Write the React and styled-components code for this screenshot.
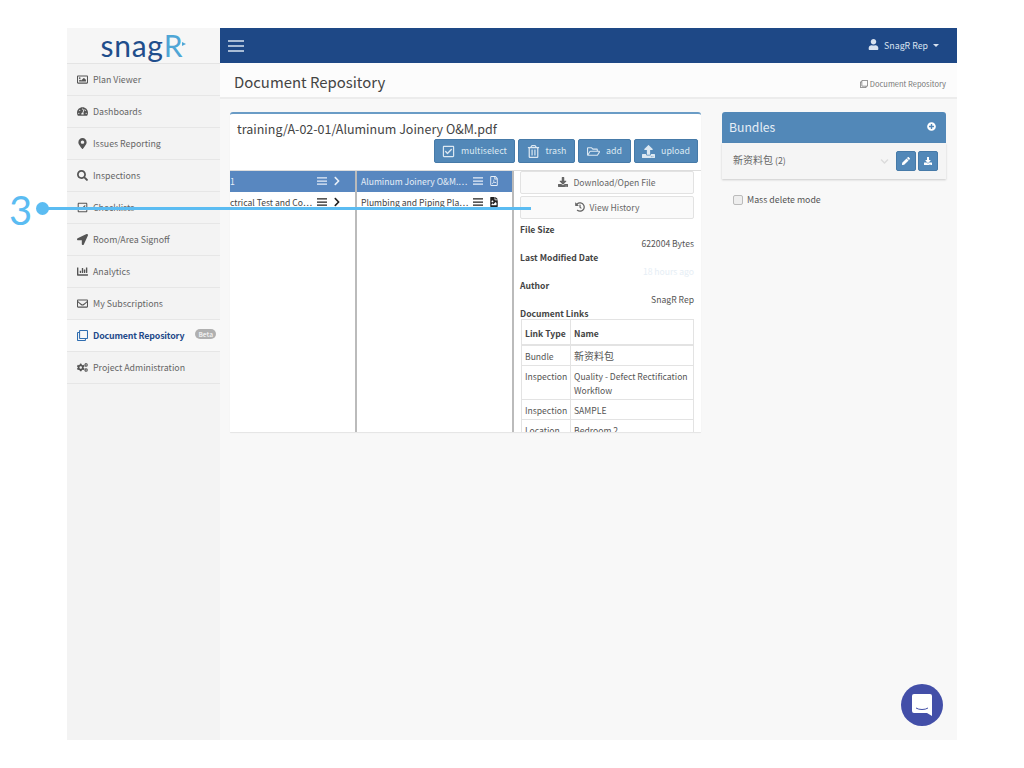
import React from 'react';
import styled, { createGlobalStyle } from 'styled-components';
import {
  FaChartBar,
  FaChevronDown,
  FaChevronRight,
  FaCogs,
  FaDownload,
  FaFileImage,
  FaHistory,
  FaLocationArrow,
  FaMapMarkerAlt,
  FaPen,
  FaPlusCircle,
  FaRegCheckSquare,
  FaRegClone,
  FaRegEnvelope,
  FaRegFilePdf,
  FaRegFolderOpen,
  FaRegImage,
  FaRegTrashAlt,
  FaSearch,
  FaTachometerAlt,
  FaUpload,
  FaUser,
} from 'react-icons/fa';

const GlobalStyle = createGlobalStyle`
  html, body {
    margin: 0;
    padding: 0;
    background: #fff;
  }
  body {
    font-family: "Noto Sans CJK SC", "Noto Sans", sans-serif;
    color: #555;
  }
`;

const Page = styled.div`
  position: relative;
  width: 1024px;
  height: 768px;
  padding: 28px 67px;
  box-sizing: border-box;
  overflow: hidden;
`;

const Frame = styled.div`
  display: flex;
  width: 890px;
  height: 712px;
  background: #f8f8f8;
`;

const Sidebar = styled.aside`
  width: 153px;
  flex: none;
  background: #f3f3f3;
`;

const LogoBox = styled.div`
  height: 35px;
  display: flex;
  align-items: center;
  justify-content: center;
  background: #f6f6f6;
  border-bottom: 1px solid #e4e4e4;
  font-family: "Lato", sans-serif;
  font-size: 30px;
  line-height: 31px;
  letter-spacing: 0.7px;
  color: #1f4e8c;
  span {
    color: #4fa6d6;
    letter-spacing: 0;
  }
  i {
    width: 0;
    height: 0;
    margin-top: -3px;
    border-left: 4px solid #4fa6d6;
    border-top: 2px solid transparent;
    border-bottom: 2px solid transparent;
  }
`;

const NavItem = styled.div`
  height: 31px;
  display: flex;
  align-items: center;
  padding-left: 10px;
  font-size: 8.8px;
  line-height: 14px;
  white-space: nowrap;
  letter-spacing: ${(p) => (p.$active ? '-0.15px' : '0')};
  color: ${(p) => (p.$active ? '#1f4a8a' : '#666')};
  font-weight: ${(p) => (p.$active ? 700 : 400)};
  background: ${(p) => (p.$active ? '#f8f8f8' : 'transparent')};
  border-bottom: 1px solid #e6e6e6;
  svg {
    width: 11px;
    height: 11px;
    margin-right: 5px;
    color: ${(p) => (p.$active ? '#2f6db0' : '#555')};
  }
`;

const BetaBadge = styled.span`
  margin-left: auto;
  margin-right: 4px;
  margin-top: -4px;
  background: #b0b0b0;
  color: #eee;
  font-size: 6.5px;
  font-weight: 700;
  line-height: 10px;
  letter-spacing: 0;
  padding: 0 3px;
  border-radius: 6px;
`;

const Main = styled.main`
  flex: 1;
  min-width: 0;
`;

const TopBar = styled.header`
  height: 35px;
  background: #1e4886;
  display: flex;
  align-items: center;
  justify-content: space-between;
  padding: 0 18px 0 8px;
  color: #d8e2f0;
  font-size: 8.8px;
  line-height: 14px;
`;

const UserMenu = styled.div`
  display: flex;
  align-items: center;
  gap: 5px;
  svg {
    width: 11px;
    height: 11px;
    margin-top: -2px;
  }
`;

const Caret = styled.span`
  width: 0;
  height: 0;
  border-left: 3px solid transparent;
  border-right: 3px solid transparent;
  border-top: 3px solid #d8e2f0;
`;

const TitleBar = styled.div`
  height: 36px;
  box-sizing: border-box;
  background: #fcfcfc;
  border-bottom: 2px solid #ececec;
  display: flex;
  align-items: center;
  justify-content: space-between;
  padding: 4px 11px 0 14px;
`;

const PageTitle = styled.h1`
  margin: 0;
  font-size: 14.9px;
  line-height: 22px;
  font-weight: 400;
  color: #444;
`;

const Crumb = styled.div`
  display: flex;
  align-items: center;
  gap: 2px;
  margin-top: 3px;
  font-size: 7.5px;
  line-height: 12px;
  color: #777;
  svg {
    width: 8px;
    height: 8px;
  }
`;

const Content = styled.div`
  display: flex;
  align-items: flex-start;
  padding: 13px 11px 0 10px;
  gap: 21px;
`;

const Panel = styled.section`
  width: 471px;
  height: 320px;
  box-sizing: border-box;
  background: #fff;
  border-top: 2px solid #6a9cc6;
  border-radius: 3px 3px 0 0;
  box-shadow: 0 1px 1px rgba(0, 0, 0, 0.08);
  overflow: hidden;
`;

const PanelHead = styled.div`
  height: 56px;
  padding: 6px 3px 0 7px;
  box-sizing: border-box;
`;

const PathTitle = styled.div`
  font-size: 12.5px;
  line-height: 17px;
  color: #444;
`;

const ActionRow = styled.div`
  display: flex;
  justify-content: flex-end;
  gap: 3px;
  margin-top: 2px;
`;

const BlueButton = styled.button`
  width: ${(p) => p.$width}px;
  height: 24px;
  padding: 0;
  display: flex;
  align-items: center;
  justify-content: center;
  gap: 6px;
  background: #5288b8;
  border: 1px solid #467aa8;
  border-radius: 2px;
  color: #dce8f2;
  font-family: inherit;
  font-size: 8.8px;
  line-height: 14px;
  svg {
    width: 13px;
    height: 13px;
  }
`;

const Browser = styled.div`
  display: flex;
  height: 262px;
  border-top: 1px solid #ddd;
`;

const Column = styled.div`
  width: ${(p) => p.$width}px;
  flex: none;
  box-sizing: border-box;
  border-right: 2px solid #bbb;
  overflow: hidden;
`;

const FileRow = styled.div`
  height: 21px;
  display: flex;
  align-items: center;
  gap: 6px;
  padding: 0 ${(p) => p.$pad}px ${(p) => (p.$selected ? 1 : 2)}px 4px;
  box-sizing: border-box;
  background: ${(p) => (p.$selected ? '#5887c0' : 'transparent')};
  color: ${(p) => (p.$selected ? '#e6eef7' : '#444')};
  font-size: 8.6px;
  line-height: 14px;
  svg {
    width: 10px;
    height: 10px;
    flex: none;
    color: ${(p) => (p.$selected ? '#e6eef7' : '#222')};
  }
`;

const RowChevron = styled(FaChevronRight)`
  && {
    width: 8px;
  }
`;

const FileName = styled.span`
  flex: 1;
  min-width: 0;
  white-space: nowrap;
`;

const ClippedName = styled(FileName)`
  margin-left: -4px;
`;

const RowMenu = styled.svg`
  width: ${(p) => p.$size}px;
  height: ${(p) => p.$size}px;
  flex: none;
`;

const Details = styled.div`
  flex: 1;
  min-width: 0;
  padding: 0 7px 0 6px;
  font-size: 8.6px;
  line-height: 14px;
  color: #555;
`;

const GhostButton = styled.button`
  width: 100%;
  height: 23px;
  display: flex;
  align-items: center;
  justify-content: center;
  gap: 5px;
  margin-bottom: 2px;
  padding: 0 0 2px;
  background: #fafafa;
  border: 1px solid #e2e2e2;
  border-radius: 2px;
  color: #666;
  font-family: inherit;
  font-size: 8.6px;
  line-height: 14px;
  svg {
    width: 10px;
    height: 10px;
  }
`;

const DetailLabel = styled.div`
  font-weight: 700;
  color: #444;
`;

const DetailValue = styled.div`
  text-align: right;
  color: ${(p) => (p.$faint ? '#e6eef5' : '#555')};
`;

const FileFacts = styled.div`
  margin-top: 3px;
`;

const LinksTable = styled.table`
  width: 173px;
  border-collapse: collapse;
  table-layout: fixed;
  margin: -1px 0 0 1px;
  th, td {
    border: 1px solid #e3e3e3;
    padding: 3px 3px 2px;
    text-align: left;
    vertical-align: top;
    font-size: 8.6px;
    line-height: 14px;
    color: #555;
  }
  th {
    height: 19px;
    vertical-align: middle;
    color: #444;
    border-bottom-width: 2px;
  }
`;

const TypeCol = styled.col`
  width: 49px;
`;

const Cjk = styled.span`
  font-size: 10px;
`;

const SidePanel = styled.div`
  width: 224px;
`;

const BundlesHead = styled.div`
  height: 31px;
  box-sizing: border-box;
  display: flex;
  align-items: center;
  justify-content: space-between;
  padding: 0 10px 2px 7px;
  background: #5288b8;
  border-radius: 3px 3px 0 0;
  color: #e6eef6;
  font-size: 12.2px;
  line-height: 18px;
  svg {
    width: 9px;
    height: 9px;
    color: #fff;
  }
`;

const BundleRow = styled.div`
  height: 36px;
  display: flex;
  align-items: center;
  padding: 0 8px 0 11px;
  background: #f5f5f5;
  box-shadow: 0 1px 2px rgba(0, 0, 0, 0.18);
  font-size: 8.8px;
  line-height: 14px;
  color: #666;
`;

const BundleName = styled.span`
  flex: 1;
  margin-top: -2px;
`;

const Chevron = styled(FaChevronDown)`
  width: 9px;
  height: 9px;
  margin-right: 5px;
  color: #dcdcdc;
`;

const SquareButton = styled.button`
  width: 20px;
  height: 20px;
  padding: 0;
  margin-left: 2px;
  display: flex;
  align-items: center;
  justify-content: center;
  background: #5288b8;
  border: 1px solid #467aa8;
  border-radius: 2px;
  color: #fff;
  svg {
    width: 8px;
    height: 8px;
  }
`;

const CheckRow = styled.label`
  display: flex;
  align-items: center;
  gap: 4px;
  margin: 14px 0 0 11px;
  font-size: 8.8px;
  line-height: 14px;
  color: #555;
`;

const CheckBox = styled.span`
  width: 8px;
  height: 8px;
  background: #eee;
  border: 1px solid #bbb;
  border-radius: 2px;
`;

const ChatBubble = styled.div`
  position: absolute;
  left: 901px;
  top: 684px;
  width: 42px;
  height: 42px;
  border-radius: 50%;
  background: #434fa8;
  display: flex;
  align-items: center;
  justify-content: center;
`;

const CalloutNumber = styled.div`
  position: absolute;
  left: 9px;
  top: 188px;
  font-family: "Lato", sans-serif;
  font-size: 40px;
  line-height: 44px;
  color: #5bbcf2;
`;

const CalloutDot = styled.div`
  position: absolute;
  left: 36px;
  top: 202px;
  width: 13px;
  height: 13px;
  border-radius: 50%;
  background: #5bbcf2;
`;

const CalloutLine = styled.div`
  position: absolute;
  left: 42px;
  top: 207px;
  width: 489px;
  height: 3px;
  background: #5bbcf2;
`;

function Hamburger({ size, weight }) {
  return (
    <RowMenu $size={size} viewBox="0 0 16 16">
      <path d="M0 3h16M0 8h16M0 13h16" stroke="currentColor" strokeWidth={weight} fill="none" />
    </RowMenu>
  );
}

const navItems = [
  ['Plan Viewer', FaRegImage],
  ['Dashboards', FaTachometerAlt],
  ['Issues Reporting', FaMapMarkerAlt],
  ['Inspections', FaSearch],
  ['Checklists', FaRegCheckSquare],
  ['Room/Area Signoff', FaLocationArrow],
  ['Analytics', FaChartBar],
  ['My Subscriptions', FaRegEnvelope],
  ['Document Repository', FaRegClone, true],
  ['Project Administration', FaCogs],
];

const links = [
  ['Bundle', <Cjk>新资料包</Cjk>],
  ['Inspection', 'Quality - Defect Rectification Workflow'],
  ['Inspection', 'SAMPLE'],
  ['Location', 'Bedroom 2'],
];

export default function App() {
  return (
    <Page>
      <GlobalStyle />
      <Frame>
        <Sidebar>
          <LogoBox>
            snag<span>R</span><i />
          </LogoBox>
          {navItems.map(([label, Icon, active]) => (
            <NavItem key={label} $active={active}>
              <Icon />
              {label}
              {active && <BetaBadge>Beta</BetaBadge>}
            </NavItem>
          ))}
        </Sidebar>
        <Main>
          <TopBar>
            <Hamburger size={16} weight={1.3} />
            <UserMenu>
              <FaUser />
              SnagR Rep
              <Caret />
            </UserMenu>
          </TopBar>
          <TitleBar>
            <PageTitle>Document Repository</PageTitle>
            <Crumb>
              <FaRegClone />
              Document Repository
            </Crumb>
          </TitleBar>
          <Content>
            <Panel>
              <PanelHead>
                <PathTitle>training/A-02-01/Aluminum Joinery O&amp;M.pdf</PathTitle>
                <ActionRow>
                  <BlueButton $width={81}><FaRegCheckSquare />multiselect</BlueButton>
                  <BlueButton $width={57}><FaRegTrashAlt />trash</BlueButton>
                  <BlueButton $width={53}><FaRegFolderOpen />add</BlueButton>
                  <BlueButton $width={64}><FaUpload />upload</BlueButton>
                </ActionRow>
              </PanelHead>
              <Browser>
                <Column $width={127}>
                  <FileRow $selected $pad={14}>
                    <ClippedName>1</ClippedName>
                    <Hamburger size={10} weight={2} />
                    <RowChevron />
                  </FileRow>
                  <FileRow $pad={14}>
                    <ClippedName>ctrical Test and Co…</ClippedName>
                    <Hamburger size={10} weight={2} />
                    <RowChevron />
                  </FileRow>
                </Column>
                <Column $width={157}>
                  <FileRow $selected $pad={13}>
                    <FileName>Aluminum Joinery O&amp;M.…</FileName>
                    <Hamburger size={10} weight={2} />
                    <FaRegFilePdf />
                  </FileRow>
                  <FileRow $pad={13}>
                    <FileName>Plumbing and Piping Pla…</FileName>
                    <Hamburger size={10} weight={2} />
                    <FaFileImage />
                  </FileRow>
                </Column>
                <Details>
                  <GhostButton><FaDownload />Download/Open File</GhostButton>
                  <GhostButton><FaHistory />View History</GhostButton>
                  <FileFacts>
                    <DetailLabel>File Size</DetailLabel>
                    <DetailValue>622004 Bytes</DetailValue>
                    <DetailLabel>Last Modified Date</DetailLabel>
                    <DetailValue $faint>18 hours ago</DetailValue>
                    <DetailLabel>Author</DetailLabel>
                    <DetailValue>SnagR Rep</DetailValue>
                    <DetailLabel>Document Links</DetailLabel>
                  </FileFacts>
                  <LinksTable>
                    <colgroup>
                      <TypeCol />
                      <col />
                    </colgroup>
                    <thead>
                      <tr>
                        <th>Link Type</th>
                        <th>Name</th>
                      </tr>
                    </thead>
                    <tbody>
                      {links.map(([type, name], i) => (
                        <tr key={i}>
                          <td>{type}</td>
                          <td>{name}</td>
                        </tr>
                      ))}
                    </tbody>
                  </LinksTable>
                </Details>
              </Browser>
            </Panel>
            <SidePanel>
              <BundlesHead>
                Bundles
                <FaPlusCircle />
              </BundlesHead>
              <BundleRow>
                <BundleName><Cjk>新资料包</Cjk> (2)</BundleName>
                <Chevron />
                <SquareButton><FaPen /></SquareButton>
                <SquareButton><FaDownload /></SquareButton>
              </BundleRow>
              <CheckRow>
                <CheckBox />
                Mass delete mode
              </CheckRow>
            </SidePanel>
          </Content>
        </Main>
      </Frame>
      <ChatBubble>
        <svg width="20" height="22" viewBox="0 0 20 22">
          <path d="M2 0h16a2 2 0 0 1 2 2v20l-5-3H2a2 2 0 0 1-2-2V2a2 2 0 0 1 2-2z" fill="#fff" />
          <path d="M4 14c3 2 9 2 12 0" fill="none" stroke="#434fa8" strokeWidth="1" />
        </svg>
      </ChatBubble>
      <CalloutNumber>3</CalloutNumber>
      <CalloutDot />
      <CalloutLine />
    </Page>
  );
}
